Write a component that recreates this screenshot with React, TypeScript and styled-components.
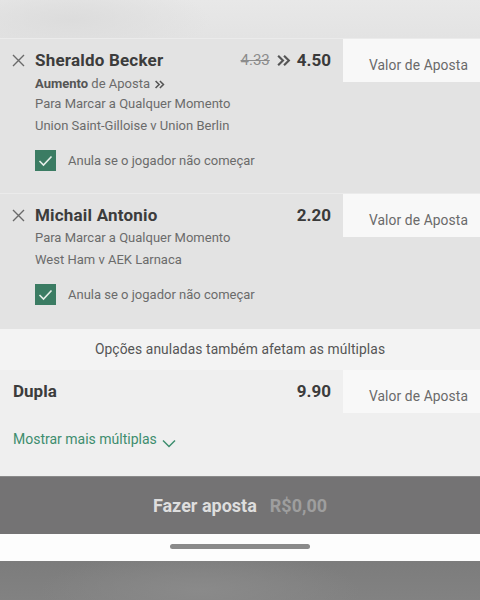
import React from "react";
import styled, { createGlobalStyle } from "styled-components";

const Global = createGlobalStyle`
  html, body { margin: 0; padding: 0; }
  body { font-family: Roboto, "Noto Sans", Arial, sans-serif; background: #e4e4e4; }
  * { box-sizing: border-box; }
`;

const Page = styled.div`
  width: 480px;
  height: 600px;
  display: flex;
  flex-direction: column;
  overflow: hidden;
`;

const TopBlur = styled.div`
  height: 38px;
  background: radial-gradient(ellipse 140px 40px at 70px 20px, #dcdcdc, transparent),
    linear-gradient(180deg, #e8e8e8, #e3e3e3);
`;

const Card = styled.div`
  display: flex;
  background: #e3e3e3;
  border-top: 1px solid #ebebeb;
`;

const CardMain = styled.div<{ $bottom: number }>`
  flex: 1;
  padding: 10px 12px ${(p) => p.$bottom}px 12px;
  display: flex;
  flex-direction: column;
`;

const StakeBox = styled.div`
  width: 137px;
  height: 43px;
  background: #f8f8f8;
  color: #6a6a6a;
  font-size: 13.8px;
  display: flex;
  align-items: center;
  justify-content: flex-end;
  padding: 8px 12px 0 0;
  letter-spacing: 0.1px;
`;

const NameRow = styled.div`
  display: flex;
  align-items: center;
  height: 22px;
`;

const CloseBtn = styled.span`
  width: 23px;
  display: flex;
  align-items: center;
  color: #666;
`;

const Name = styled.span`
  flex: 1;
  font-weight: 700;
  font-size: 17px;
  color: #3c3c3c;
  letter-spacing: 0.2px;
`;

const Odds = styled.span`
  display: flex;
  align-items: center;
  gap: 6px;
`;

const OldOdds = styled.span`
  font-size: 15px;
  color: #8c8c8c;
  text-decoration: line-through;
  text-decoration-thickness: 1px;
`;

const OddsValue = styled.span`
  font-weight: 700;
  font-size: 17px;
  color: #3a3a3a;
`;

const Line = styled.div<{ $lh?: number; $mt?: number }>`
  margin-left: 23px;
  margin-top: ${(p) => p.$mt ?? 2}px;
  font-size: 13px;
  line-height: ${(p) => p.$lh ?? 20}px;
  color: #6b6b6b;
  display: flex;
  align-items: center;
  gap: 4px;
`;

const Strong = styled.b`
  color: #555;
  font-weight: 700;
`;

const CheckRow = styled.label`
  margin-left: 23px;
  margin-top: 14px;
  display: flex;
  align-items: center;
  gap: 12px;
  font-size: 13px;
  color: #6b6b6b;
`;

const Box = styled.span`
  width: 21px;
  height: 21px;
  background: #3b7c63;
  display: flex;
  align-items: center;
  justify-content: center;
`;

const Notice = styled.div`
  height: 40px;
  background: #f3f3f3;
  display: flex;
  align-items: center;
  justify-content: center;
  font-size: 13.8px;
  color: #555;
  letter-spacing: 0.1px;
`;

const Multi = styled.div`
  background: #efefef;
  display: flex;
  flex-direction: column;
  padding-bottom: 27px;
`;

const MultiTop = styled.div`
  display: flex;
  border-top: 1px solid #f3f3f3;
`;

const MultiName = styled.div`
  flex: 1;
  display: flex;
  align-items: center;
  justify-content: space-between;
  padding: 10px 12px 0 13px;
  height: 32px;
  font-weight: 700;
  font-size: 17px;
  color: #3c3c3c;
`;

const MoreLink = styled.div`
  margin: 16px 0 0 13px;
  display: flex;
  align-items: center;
  gap: 5px;
  color: #3d8d6e;
  font-size: 14px;
  line-height: 20px;
`;

const PlaceBar = styled.div`
  height: 58px;
  background: #747374;
  border-top: 1px solid #8a8a8a;
  display: flex;
  align-items: center;
  justify-content: center;
  gap: 13px;
  font-weight: 700;
  font-size: 18px;
`;

const PlaceLabel = styled.span`
  color: #dedede;
`;

const PlaceAmount = styled.span`
  color: #9e9e9e;
`;

const HomeArea = styled.div`
  height: 27px;
  background: #fdfdfd;
  display: flex;
  align-items: center;
  justify-content: center;
  padding-bottom: 2px;
`;

const HomeBar = styled.div`
  width: 140px;
  height: 5px;
  border-radius: 3px;
  background: #8a8a8a;
`;

const BottomBlur = styled.div`
  flex: 1;
  background: radial-gradient(ellipse 160px 40px at 200px 30px, #8a8a8a, transparent),
    linear-gradient(180deg, #7c7c7c, #828282);
`;

const XIcon = () => (
  <svg width="13" height="13" viewBox="0 0 13 13">
    <path d="M1 1 L12 12 M12 1 L1 12" stroke="#6a6a6a" strokeWidth="1.4" fill="none" />
  </svg>
);

const Double = ({ size, color }: { size: number; color: string }) => (
  <svg width={size} height={size} viewBox="0 0 14 14">
    <path d="M2 2.5 L6.5 7 L2 11.5 M7.5 2.5 L12 7 L7.5 11.5" stroke={color} strokeWidth="2" fill="none" />
  </svg>
);

const Tick = () => (
  <svg width="15" height="12" viewBox="0 0 15 12">
    <path d="M1.5 6 L5.5 10 L13.5 1.5" stroke="#e6efe9" strokeWidth="1.6" fill="none" />
  </svg>
);

const ChevronDown = () => (
  <svg width="14" height="9" viewBox="0 0 14 9" style={{ marginTop: 8 }}>
    <path d="M1 1.5 L7 7.5 L13 1.5" stroke="#3d8d6e" strokeWidth="1.5" fill="none" />
  </svg>
);

type Sel = {
  name: string;
  odds: string;
  old?: string;
  market: string;
  event: string;
  bottom: number;
};

const selections: Sel[] = [
  {
    name: "Sheraldo Becker",
    odds: "4.50",
    old: "4.33",
    market: "Para Marcar a Qualquer Momento",
    event: "Union Saint-Gilloise v Union Berlin",
    bottom: 22,
  },
  {
    name: "Michail Antonio",
    odds: "2.20",
    market: "Para Marcar a Qualquer Momento",
    event: "West Ham v AEK Larnaca",
    bottom: 24,
  },
];

export default function App() {
  return (
    <Page>
      <Global />
      <TopBlur />
      {selections.map((s) => (
        <Card key={s.name}>
          <CardMain $bottom={s.bottom}>
            <NameRow>
              <CloseBtn>
                <XIcon />
              </CloseBtn>
              <Name>{s.name}</Name>
              <Odds>
                {s.old && <OldOdds>{s.old}</OldOdds>}
                {s.old && <Double size={15} color="#555" />}
                <OddsValue>{s.odds}</OddsValue>
              </Odds>
            </NameRow>
            {s.old && (
              <Line $lh={16} $mt={5}>
                <span>
                  <Strong>Aumento</Strong> de Aposta
                </span>
                <Double size={11} color="#555" />
              </Line>
            )}
            <Line>{s.market}</Line>
            <Line>{s.event}</Line>
            <CheckRow>
              <Box>
                <Tick />
              </Box>
              Anula se o jogador não começar
            </CheckRow>
          </CardMain>
          <StakeBox>Valor de Aposta</StakeBox>
        </Card>
      ))}
      <Notice>Opções anuladas também afetam as múltiplas</Notice>
      <Multi>
        <MultiTop>
          <MultiName>
            <span>Dupla</span>
            <span>9.90</span>
          </MultiName>
          <StakeBox>Valor de Aposta</StakeBox>
        </MultiTop>
        <MoreLink>
          Mostrar mais múltiplas
          <ChevronDown />
        </MoreLink>
      </Multi>
      <PlaceBar>
        <PlaceLabel>Fazer aposta</PlaceLabel>
        <PlaceAmount>R$0,00</PlaceAmount>
      </PlaceBar>
      <HomeArea>
        <HomeBar />
      </HomeArea>
      <BottomBlur />
    </Page>
  );
}
